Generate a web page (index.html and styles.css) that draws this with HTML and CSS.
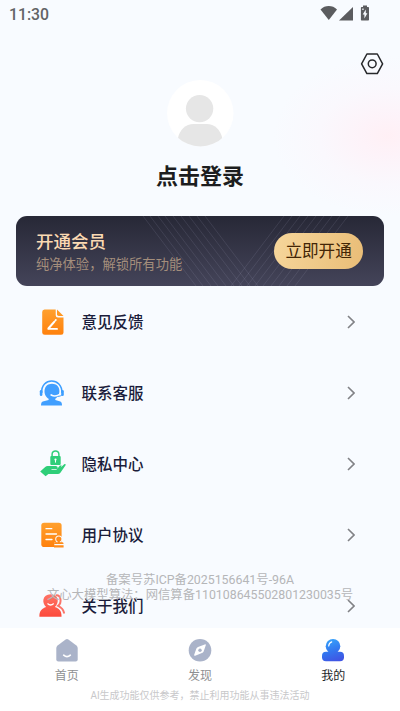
FILE: index.html
```html
<!DOCTYPE html>
<html lang="zh-CN">
<head>
<meta charset="utf-8">
<title>我的</title>
<link rel="stylesheet" href="styles.css">
</head>
<body>
<div class="screen">
  <header class="status">
    <span class="time">11:30</span>
    <svg class="status-icons" width="50" height="18" viewBox="0 0 50 18" fill="#5b5c5f">
      <path d="M.5 4.500C5-.1 12.500-.1 17 4.500L8.800 15z"/>
      <path d="M33 2v13.500H19z"/>
      <path d="M43 .5h4V2h1.200q.8 0 .8.800v12q0 .7-.8.700h-6.600q-.7 0-.7-.7v-12q0-.8.700-.8H43z"/>
      <path fill="#f8fbff" d="M45.800 4.500 42.700 9.500h1.700V13.500l3-5.200h-1.600zM42.300 3.500h1.300v1.600h-1.300z"/>
    </svg>
  </header>
  <div class="toolbar">
    <svg width="24" height="22" viewBox="0 0 24 22" fill="none" stroke="#27282b" stroke-width="1.500" stroke-linejoin="round">
      <path d="M6.900 1h10.400l5.300 9.800-5.300 9.800H6.900L1.600 10.800z"/><circle cx="12.200" cy="10.800" r="3.900"/>
    </svg>
  </div>
  <section class="profile">
    <svg width="67" height="67" viewBox="0 0 67 67">
      <defs><clipPath id="disc"><circle cx="33.300" cy="33.200" r="33.200"/></clipPath></defs>
      <circle cx="33.300" cy="33.200" r="33.200" fill="#fff"/>
      <g fill="#e6e6e6" clip-path="url(#disc)"><circle cx="32.600" cy="28.600" r="13.700"/><path d="M11 58C12.600 50 18.600 44 26.600 44h13c8 0 14 6 15.600 14v9H11z"/></g>
    </svg>
    <h1>点击登录</h1>
  </section>
  <section class="vip">
    <svg class="vip-lines" width="367" height="70" viewBox="0 0 367 70" fill="none" stroke="#a9a9c5" stroke-opacity=".19" stroke-width=".8">
      <path d="M127 0l53 70M134 0l53 70M142 0l53 70M149 0l53 70M157 0l53 70M165 0l53 70M173 0l53 70M181 0l53 70M189 0l53 70M268 0l-53 70M276 0l-53 70M284 0l-53 70M292 0l-53 70M300 0l-53 70M308 0l-53 70M316 0l-53 70M324 0l-53 70M332 0l-53 70"/>
    </svg>
    <div class="vip-copy"><h2>开通会员</h2><p>纯净体验，解锁所有功能</p></div>
    <button class="vip-button">立即开通</button>
  </section>
  <main class="menu">
    <svg class="defs" width="0" height="0">
      <defs><linearGradient id="orange" x2="0" y2="1"><stop stop-color="#ffa02e"/><stop offset="1" stop-color="#ff810d"/></linearGradient>
      <linearGradient id="red" x2="0" y2="1"><stop stop-color="#ff7466"/><stop offset="1" stop-color="#fc4a3c"/></linearGradient></defs>
    </svg>
    <div class="row">
      <svg class="icon" viewBox="0 0 28 28"><path fill="url(#orange)" d="M5.500 1.500h11.200v5.700q0 2.300 2.300 2.300h5.500v15q0 2.300-2.300 2.300H5.700q-2.500 0-2.500-2.300V4q0-2.500 2.300-2.500z"/><path fill="#ff9824" d="M18 1.500 24.500 8h-4.800Q18 8 18 6.300z"/><path d="m9.600 20.200 5.600-6.300" fill="none" stroke="#fff" stroke-width="2.100" stroke-linecap="round"/><path d="m16.300 12.600.6-.7M9.300 20.900h8.800" fill="none" stroke="#fff" stroke-width="1.700" stroke-linecap="round"/></svg>
      <span>意见反馈</span><svg class="chevron" viewBox="0 0 8 14"><path d="m1 1 6 6-6 6"/></svg>
    </div>
    <div class="row">
      <svg class="icon" viewBox="0 0 28 28"><path fill="none" stroke="#3c9eff" stroke-width="1.500" d="M2.700 14C1.700-2 23.500-2 22.900 14"/><rect x=".8" y="11" width="2.600" height="6" rx="1.300" fill="#3c9eff"/><rect x="22.200" y="11" width="2.600" height="6" rx="1.300" fill="#3c9eff"/><path fill="#419fff" d="M13 4.800c9 0 9.500 11.500 3.300 15v1.200l5 1.600q1.700.5 1.700 3.900H2q0-3.400 1.800-3.900l5.800-1.600v-1.200C3.500 16.200 4 4.800 13 4.800z"/><path d="M12.200 16q4 2.300 9-.7" fill="none" stroke="#f8fbff" stroke-width="1.700" stroke-linecap="round"/><path d="M23.500 15.500q-2 2-5 2" fill="none" stroke="#419fff" stroke-width="1"/></svg>
      <span>联系客服</span><svg class="chevron" viewBox="0 0 8 14"><path d="m1 1 6 6-6 6"/></svg>
    </div>
    <div class="row">
      <svg class="icon" viewBox="0 0 28 28"><g fill="#2fce79"><rect x="11.300" y="6" width="10.400" height="9" rx="1"/><path d="m1.200 21.600 5-4.700q1-.9 2.500-.9h8c2.500 0 2.700 3.200.1 3.300h-4.300v.8h4.800l3.600-4.600h1.900l-1.100 2 3.500-3.200c1.200-.9 2 0 1.200 1.300l-5 7.100q-1 1.300-2.600 1.300H9.400l-2.800 2.200z"/></g><path d="M13.100 7V4.300a3.400 3.400 0 0 1 6.800 0V7" fill="none" stroke="#2fce79" stroke-width="1.500"/><circle cx="16.500" cy="9.600" r="1.100" fill="#fff"/><path d="M16.500 9v3.600" stroke="#fff"/></svg>
      <span>隐私中心</span><svg class="chevron" viewBox="0 0 8 14"><path d="m1 1 6 6-6 6"/></svg>
    </div>
    <div class="row">
      <svg class="icon" viewBox="0 0 28 28"><rect x="2.300" y="1.800" width="20.300" height="24.200" rx="2.800" fill="url(#orange)"/><path d="M7 7.700h5.800M7 13h10.500M7 18.500h6" stroke="#fff" stroke-width="1.300" stroke-linecap="round"/><path d="M19.800 18.200v4M15.300 23.300h9M15.300 26h9" fill="none" stroke="#f8fbff" stroke-width="3.600"/><circle cx="19.800" cy="18" r="3.600" fill="#f8fbff"/><circle cx="19.800" cy="18" r="2.600" fill="#ff8b19"/><path fill="#ff8b19" d="M18.800 19h2v2.300h2.600q1.200 0 1.200 1.700h-9.600q0-1.700 1.200-1.700h2.600zM15 24.300h9.600v2.300H15z"/></svg>
      <span>用户协议</span><svg class="chevron" viewBox="0 0 8 14"><path d="m1 1 6 6-6 6"/></svg>
    </div>
    <div class="row">
      <svg class="icon" viewBox="0 0 28 28"><path fill="none" stroke="#fb7469" stroke-width="2" stroke-linecap="round" d="M17.500 3.300c4.500 0 5.600 7.300 1.600 10.500q5 2.200 5.900 7"/><path fill="url(#red)" d="M11.600 2.200c8.500 0 8.800 8.800 4.300 12.700 4 1.100 6.600 4 6.600 8.500v1.300H.4v-1.300c0-4.500 3-7.400 6.700-8.500C2.600 11 3.200 2.200 11.600 2.200z"/><path d="M8.500 11.500q3.100 3 6.200 0" fill="none" stroke="#fff" stroke-width="1.200"/></svg>
      <span>关于我们</span><svg class="chevron" viewBox="0 0 8 14"><path d="m1 1 6 6-6 6"/></svg>
    </div>
    <div class="legal"><p>备案号苏ICP备2025156641号-96A</p><p class="algorithm">文心大模型算法：网信算备110108645502801230035号</p></div>
  </main>
  <footer class="bottom">
    <nav>
      <a><svg width="24" height="24" viewBox="0 0 24 24"><path fill="#aab3c9" d="M10.600 1.500q1.400-1 2.800 0l8 5.900q1.300 1 1.300 2.600v11.500q0 2-2 2H3.300q-2 0-2-2V10q0-1.600 1.300-2.600z"/><path d="M8.700 17.200q3.300 3 6.600 0" fill="none" stroke="#fff" stroke-width="1.700" stroke-linecap="round"/></svg><span>首页</span></a>
      <a><svg width="24" height="24" viewBox="0 0 24 24"><circle cx="12" cy="12.200" r="11.300" fill="#aab3c9"/><path fill="#fff" d="M17.700 7.400q.5-1.500-1-1L10 9q-1.200.5-1.700 1.700l-2.100 6q-.4 1.400 1 1l6.700-2.600q1.200-.5 1.700-1.700z"/><circle cx="12" cy="12.200" r="1.700" fill="#aab3c9"/></svg><span>发现</span></a>
      <a class="active"><svg width="24" height="24" viewBox="0 0 24 24"><defs><linearGradient id="blue" gradientUnits="userSpaceOnUse" x1="8" y1="1" x2="15" y2="23"><stop stop-color="#35a2fb"/><stop offset=".55" stop-color="#3375ef"/><stop offset="1" stop-color="#4055e3"/></linearGradient></defs><g fill="url(#blue)"><circle cx="12" cy="8.200" r="7.300"/><rect x="1" y="13.800" width="22" height="9.500" rx="4"/></g><path d="M7.700 8q.3-3.200 3-4.100" fill="none" stroke="#fff" stroke-width="1.200" stroke-linecap="round"/></svg><span>我的</span></a>
    </nav>
    <p class="notice">AI生成功能仅供参考，禁止利用功能从事违法活动</p>
  </footer>
</div>
</body>
</html>
```

FILE: styles.css
```css
* { box-sizing: border-box; margin: 0; padding: 0; }
body { font-family: Roboto, "Noto Sans CJK SC", sans-serif; }
.screen {
  display: flex;
  flex-direction: column;
  width: 400px;
  height: 711px;
  overflow: hidden;
  background: radial-gradient(ellipse 115px 80px at 388px 136px, #fff0f5 0, #fdf3f9 25%, #faf8fd 60%, rgba(248, 251, 255, 0) 100%), #f8fbff;
}
.status { display: flex; justify-content: space-between; height: 48px; padding: 5px 30px 0 9px; }
.time { font-size: 15.800px; line-height: 19px; font-weight: 500; color: #626366; }
.status-icons { display: block; }
.toolbar { display: flex; justify-content: flex-end; height: 32px; padding: 5px 16px 0 0; }
.profile { display: flex; flex-direction: column; align-items: center; height: 136px; }
.profile svg { display: block; flex: none; margin-top: -.5px; }
.profile h1 { margin-top: 13.500px; font-size: 22px; line-height: 34px; font-weight: 700; color: #1c1d20; }
.vip {
  position: relative;
  display: flex;
  justify-content: space-between;
  height: 70px;
  margin: 0 16.400px;
  padding: 13px 20.500px 0 19.600px;
  border-radius: 11px;
  background: linear-gradient(#272836, #444459);
  overflow: hidden;
}
.vip-lines { position: absolute; inset: 0; }
.vip-copy, .vip-button { position: relative; }
.vip-copy h2 { margin-top: 1px; font-size: 17.500px; line-height: 24px; font-weight: 500; color: #fbdab3; }
.vip-copy p { margin-top: 1px; font-size: 13.300px; line-height: 20px; color: #a48e7c; }
.vip-button {
  width: 89px;
  height: 36px;
  margin-top: 4px;
  border: 0;
  border-radius: 18px;
  background: linear-gradient(100deg, #f6d69b, #e9bd77);
  color: #422506;
  font: 400 16.600px/37px Roboto, "Noto Sans CJK SC", sans-serif;
}
.menu { position: relative; flex: none; height: 342px; overflow: hidden; }
.defs { position: absolute; }
.row { display: flex; align-items: center; height: 71px; padding: 0 45px 0 38.600px; font-size: 15.500px; line-height: 24px; font-weight: 500; color: #1b1d3b; }
.row span { flex: 1; margin: 2px 0 0 14.800px; }
.icon { width: 28px; height: 28px; }
.chevron { width: 8px; height: 14px; fill: none; stroke: #818286; stroke-width: 1.600; }
.legal { position: absolute; inset: 287px 0 auto; color: #b5b6b8; font-size: 12.350px; line-height: 14.500px; text-align: center; white-space: nowrap; }
.bottom { flex: none; height: 83px; padding-top: 10px; background: #fff; }
.bottom nav { display: flex; }
.bottom a { display: flex; flex: 1; flex-direction: column; align-items: center; font-size: 12px; line-height: 18px; color: #8e8f91; }
.bottom a svg { display: block; margin-bottom: 5px; }
.bottom a.active { color: #232426; }
.notice { margin-top: 4px; font-size: 10px; line-height: 14px; text-align: center; color: #c8c8ca; }
```
